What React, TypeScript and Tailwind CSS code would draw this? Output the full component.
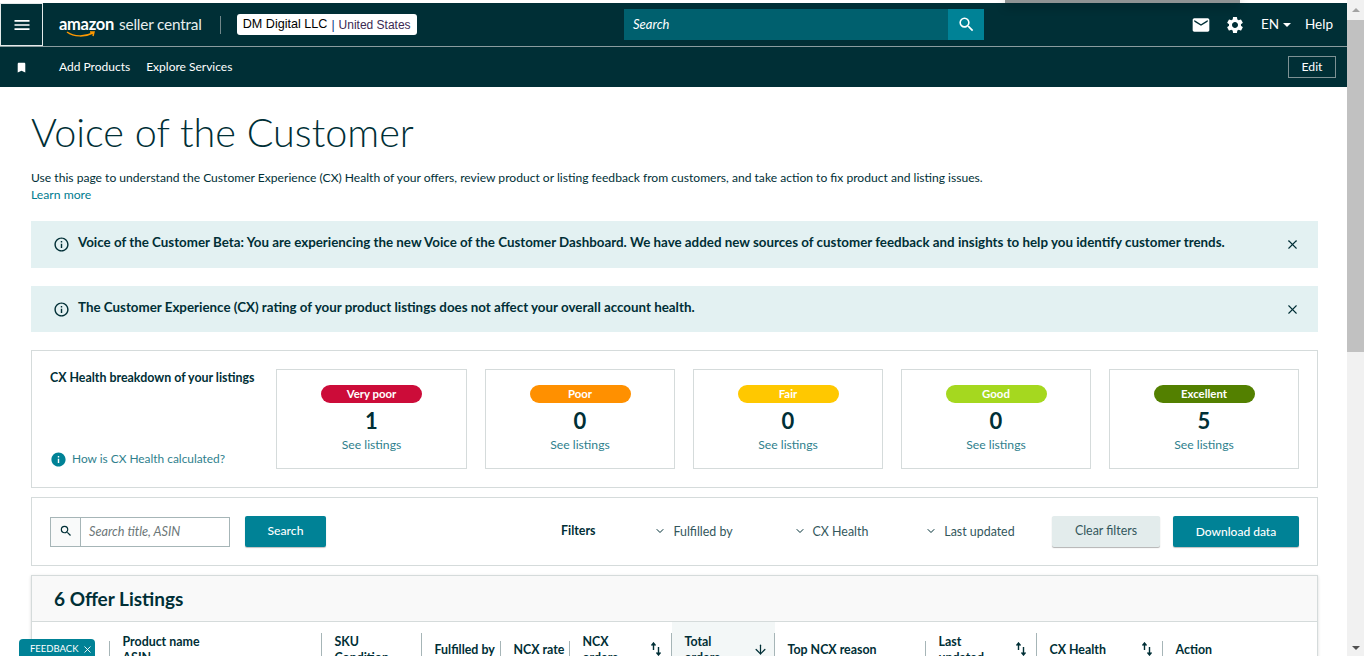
import { ArrowDown, ChevronDown, X } from "lucide-react";
import { MdBookmark, MdEmail, MdInfo, MdInfoOutline, MdMenu, MdSearch, MdSettings } from "react-icons/md";

const cards = [
  { label: "Very poor", count: 1, pill: "bg-[#cc0c39]", width: "w-[191px]" },
  { label: "Poor", count: 0, pill: "bg-[#ff9000]", width: "w-[190px]" },
  { label: "Fair", count: 0, pill: "bg-[#ffc800]", width: "w-[190px]" },
  { label: "Good", count: 0, pill: "bg-[#a5d81f]", width: "w-[190px]" },
  { label: "Excellent", count: 5, pill: "bg-[#538000]", width: "w-[190px]" },
];

function SortIcon() {
  return (
    <svg width="12" height="14" viewBox="0 0 12 14" className="mr-[3px] shrink-0 text-[#002f36]">
      <path d="M3.5 8V1.5M1.5 3.5 3.5 1l2 2.5" fill="none" stroke="currentColor" strokeWidth="1.4" />
      <path d="M8.5 5v7.5M6.5 10.5l2 2.5 2-2.5" fill="none" stroke="currentColor" strokeWidth="1.4" />
    </svg>
  );
}

function Banner({ text, height }: { text: string; height: string }) {
  return (
    <div className={`flex items-center bg-[#e3f1f2] pl-[22px] pr-[18px] ${height}`}>
      <MdInfoOutline className="mr-[8px] text-[#002f36]" size={17} />
      <span className="flex-1 pb-[4px] text-[13.35px] font-bold text-[#002f36]">{text}</span>
      <X size={15} strokeWidth={1.7} className="text-[#002f36]" />
    </div>
  );
}

function Filter({ label, className }: { label: string; className: string }) {
  return (
    <div className={`flex items-center ${className}`}>
      <ChevronDown size={12} strokeWidth={2} className="mr-[7px] text-[#002f36]" />
      <span className="pt-[2px] text-[12.4px] text-[#33575c]">{label}</span>
    </div>
  );
}

function HeadCell({ width, lines, sort, line = "short", active }: { width: string; lines: string[]; sort?: boolean; line?: "tall" | "short" | "none"; active?: boolean }) {
  return (
    <div className={`relative flex shrink-0 items-start pt-[12px] pl-[12.5px] pr-[7px] ${width} ${active ? "bg-[#f3f7f7]" : ""}`}>
      <div className={`flex-1 whitespace-nowrap text-[12.4px] font-bold leading-4 text-[#002f36] ${lines.length === 1 ? "pt-[8px]" : ""}`}>
        {lines.map((l) => (
          <div key={l}>{l}</div>
        ))}
      </div>
      {active ? <ArrowDown size={15} className="mt-[8px] text-[#002f36]" /> : null}
      {sort ? <div className="mt-[8px]"><SortIcon /></div> : null}
      {line === "tall" ? <div className="absolute right-0 top-[11px] h-[30px] w-px bg-[#a6b5b7]" /> : null}
      {line === "short" ? <div className="absolute right-0 top-[19px] h-[22px] w-px bg-[#a6b5b7]" /> : null}
    </div>
  );
}

export default function App() {
  return (
    <div className="relative flex h-[656px] w-[1364px] overflow-hidden bg-white font-['Lato',sans-serif] text-[#002f36]">
      <div className="w-[1347px] shrink-0 pt-[3px]">
        <header className="flex h-[44px] items-center border-b border-[#8a9c9f] bg-[#002f36] text-white">
          <div className="flex h-full w-[624px] shrink-0 items-center">
            <div className="flex h-full w-[43px] items-center justify-center border border-[#e4eaea]">
              <MdMenu size={20} />
            </div>
            <div className="ml-[16px] flex items-baseline whitespace-nowrap leading-none">
              <div className="relative">
                <span className="text-[16.5px] font-bold tracking-[-0.3px]">amazon</span>
                <svg width="30" height="8" viewBox="0 0 30 8" className="absolute left-[7px] top-[15px]">
                  <path d="M1 1c7 5 18 5 26 1M24 1l4 0-1 4" fill="none" stroke="#ff9900" strokeWidth="1.5" />
                </svg>
              </div>
              <span className="ml-[5px] text-[15.4px] tracking-[-0.2px] text-[#e8eeee]">seller central</span>
            </div>
            <div className="ml-[18px] h-[18px] w-px bg-[#71878a]" />
            <div className="ml-[16px] flex h-[21px] w-[180px] items-center justify-center rounded-[3px] bg-white font-['Liberation_Sans',sans-serif] text-[12px] text-black">
              <span className="text-[12.6px]">DM Digital LLC</span>
              <span className="mx-1 text-[#002f86]">|</span>
              <span className="text-[#3b2a52]">United States</span>
            </div>
          </div>
          <div className="flex h-[31px] w-[360px]">
            <div className="flex flex-1 items-center bg-[#00606e] pl-[9px] text-[13px] italic text-white">Search</div>
            <div className="flex w-[36px] items-center justify-center bg-[#008296]">
              <MdSearch size={19} />
            </div>
          </div>
          <div className="ml-auto flex items-center pr-[14px]">
            <MdEmail size={20} />
            <MdSettings size={20} className="ml-[14px]" />
            <span className="ml-[16px] text-[13.5px]">EN</span>
            <span className="ml-[4px] h-0 w-0 border-x-4 border-t-4 border-x-transparent border-t-white" />
            <span className="ml-[14px] text-[13.5px]">Help</span>
          </div>
        </header>
        <nav className="flex h-[40px] items-center bg-[#002f36] text-[12px] text-white">
          <MdBookmark size={13} className="ml-[15px]" />
          <span className="ml-[31px]">Add Products</span>
          <span className="ml-[16px]">Explore Services</span>
          <button className="ml-auto mr-[11px] h-[22px] w-[48px] border border-[#7d9194] text-[12.2px]">Edit</button>
        </nav>
        <main className="px-[31px] pr-[29px]">
          <h1 className="mt-[15px] text-[39.6px] font-light leading-[60px] text-[#002f36]">Voice of the Customer</h1>
          <p className="mt-[7px] text-[12.1px] leading-[17px]">
            Use this page to understand the Customer Experience (CX) Health of your offers, review product or listing feedback from customers, and take action to fix product and listing issues.
          </p>
          <a className="block text-[12.2px] leading-[17px] text-[#007c90]">Learn more</a>
          <div className="mt-[18px] flex flex-col gap-[18px]">
            <Banner height="h-[47px]" text="Voice of the Customer Beta: You are experiencing the new Voice of the Customer Dashboard. We have added new sources of customer feedback and insights to help you identify customer trends." />
            <Banner height="h-[46px]" text="The Customer Experience (CX) rating of your product listings does not affect your overall account health." />
          </div>
          <section className="mt-[18px] flex h-[138px] border border-[#d5dbdb] p-[18px]">
            <div className="flex w-[226px] shrink-0 flex-col justify-between py-[1px]">
              <div className="text-[12.4px] font-bold leading-4">CX Health breakdown of your listings</div>
              <div className="flex items-center gap-[5px] text-[11.9px] text-[#2f7f8d]">
                <MdInfo size={17} className="text-[#008296]" />
                How is CX Health calculated?
              </div>
            </div>
            <div className="flex gap-[18px]">
              {cards.map((c) => (
                <div key={c.label} className={`flex h-[100px] shrink-0 flex-col items-center border border-[#d5dbdb] pt-[15px] ${c.width}`}>
                  <div className={`flex h-[18px] w-[101px] items-center justify-center rounded-full text-[11.4px] font-bold text-white ${c.pill}`}>{c.label}</div>
                  <div className="mt-[3px] text-[22px] font-bold leading-[30px]">{c.count}</div>
                  <div className="text-[12.2px] leading-[18px] text-[#2f7f8d]">See listings</div>
                </div>
              ))}
            </div>
          </section>
          <section className="mt-[9px] flex h-[69px] items-center border border-[#d5dbdb] pl-[18px] pr-[18px]">
            <div className="flex h-[30px] w-[180px] border border-[#a6b5b7]">
              <div className="flex w-[30px] items-center justify-center border-r border-[#a6b5b7] bg-[#f9fafa] pb-[2px]">
                <MdSearch size={14} />
              </div>
              <div className="flex items-center pl-[8px] text-[12.7px] italic text-[#6c7778]">Search title, ASIN</div>
            </div>
            <button className="ml-[15px] h-[31px] w-[81px] rounded-[2px] bg-[#008296] text-[12.2px] font-medium text-white shadow-[0_1px_1px_rgba(0,0,0,0.25)]">Search</button>
            <span className="ml-[235px] text-[12.4px] font-bold">Filters</span>
            <Filter label="Fulfilled by" className="ml-[59px]" />
            <Filter label="CX Health" className="ml-[61px]" />
            <Filter label="Last updated" className="ml-[57px]" />
            <button className="ml-auto h-[31px] w-[108px] rounded-[2px] bg-[#e3ecec] text-[12.4px] text-[#33575c] shadow-[0_1px_1px_rgba(0,0,0,0.3)]">Clear filters</button>
            <button className="ml-[13px] h-[31px] w-[126px] rounded-[2px] bg-[#008296] text-[12px] font-medium text-white shadow-[0_1px_1px_rgba(0,0,0,0.25)]">Download data</button>
          </section>
          <section className="mt-[9px] border border-[#d5dbdb] shadow-[0_1px_3px_rgba(0,0,0,0.15)]">
            <div className="flex h-[46px] items-center border-b border-[#d5dbdb] bg-[#f9f9f9] pl-[22px] pt-[1px] text-[19px] font-bold">6 Offer Listings</div>
            <div className="flex h-[60px]">
              <HeadCell width="w-[78px]" lines={[]} line="short" />
              <HeadCell width="w-[212px]" lines={["Product name", "ASIN"]} line="tall" />
              <HeadCell width="w-[100px]" lines={["SKU", "Condition"]} line="tall" />
              <HeadCell width="w-[79px]" lines={["Fulfilled by"]} />
              <HeadCell width="w-[69px]" lines={["NCX rate"]} />
              <HeadCell width="w-[102px]" lines={["NCX", "orders"]} sort line="tall" />
              <HeadCell width="w-[103px]" lines={["Total", "orders"]} active line="tall" />
              <HeadCell width="w-[151px]" lines={["Top NCX reason"]} />
              <HeadCell width="w-[111px]" lines={["Last", "updated"]} sort line="tall" />
              <HeadCell width="w-[126px]" lines={["CX Health"]} sort line="short" />
              <HeadCell width="w-[154px]" lines={["Action"]} line="none" />
            </div>
          </section>
        </main>
      </div>
      <aside className="flex w-[17px] shrink-0 flex-col items-center bg-[#f1f1f1]">
        <div className="flex h-[20px] items-center justify-center">
          <span className="h-0 w-0 border-x-4 border-b-4 border-x-transparent border-b-[#a3a3a3]" />
        </div>
        <div className="h-[332px] w-full bg-[#c1c1c1]" />
        <div className="mt-auto flex h-[17px] items-center justify-center">
          <span className="h-0 w-0 border-x-4 border-t-4 border-x-transparent border-t-[#505050]" />
        </div>
      </aside>
      <div className="absolute left-[1005px] top-0 h-[3px] w-[235px] bg-[#8f9494] shadow-[0_3px_10px_rgba(0,0,0,0.45)]" />
      <div className="absolute bottom-0 left-[19px] flex h-[17px] w-[76px] items-start gap-[3px] rounded-t-[4px] bg-[#008296] pl-[11px] pt-[3px] text-[9.5px] leading-[14px] text-white">
        FEEDBACK
        <X size={11} className="mt-[2px]" />
      </div>
    </div>
  );
}
